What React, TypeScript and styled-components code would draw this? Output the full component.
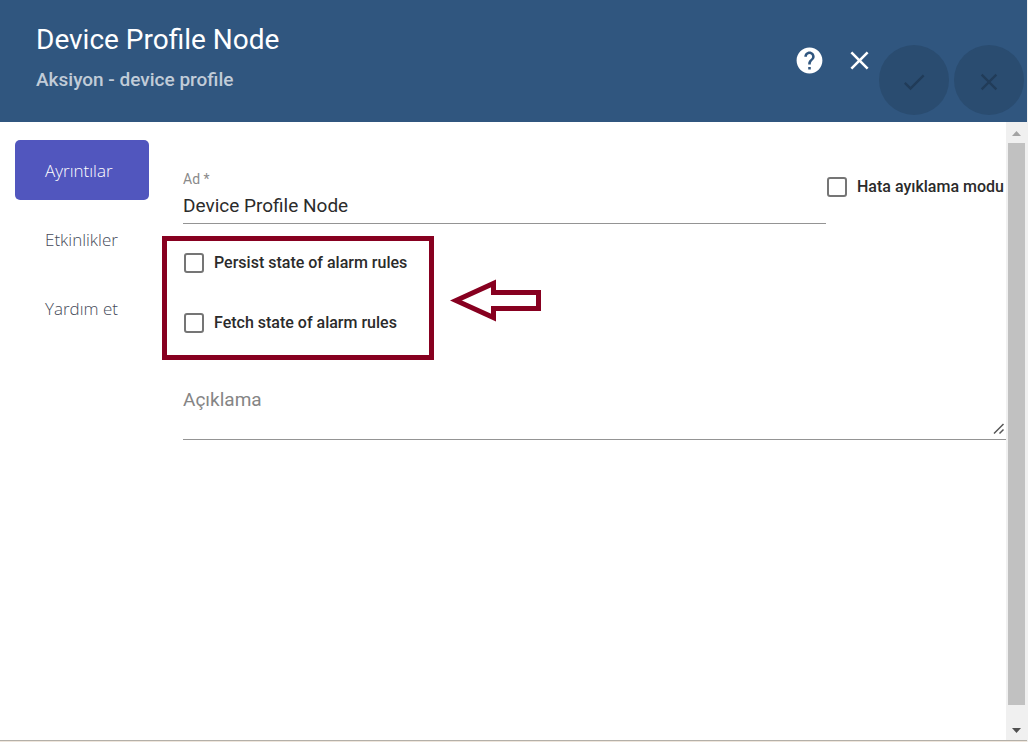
import React from 'react';
import styled, { createGlobalStyle } from 'styled-components';

const GlobalStyle = createGlobalStyle`
  * { box-sizing: border-box; }
  body {
    margin: 0;
    background: #fff;
    color: #222;
    font-family: Roboto, "Liberation Sans", sans-serif;
  }
  button, input, textarea { font-family: inherit; }
`;

const Page = styled.div`
  display: flex;
  flex-direction: column;
  min-height: 100vh;
  border-right: 1px solid #f0f0f0;
  background: #efe6dc;
`;

const Header = styled.header`
  display: flex;
  align-items: flex-start;
  height: 122px;
  padding: 20px 3px 0 36px;
  background: #30567f;
`;

const Titles = styled.div`
  flex: 1;
  min-width: 0;
`;

const Title = styled.h1`
  margin: 0;
  font-size: 28px;
  line-height: 40px;
  font-weight: 400;
  color: #fff;
`;

const Subtitle = styled.p`
  margin: 8px 0 0;
  font-size: 19px;
  line-height: 24px;
  font-weight: 500;
  color: #c1ccd8;
`;

const HeaderActions = styled.div`
  display: flex;
  align-items: center;
  gap: 10px;
  padding-top: 20px;
`;

const IconButton = styled.button`
  display: grid;
  place-items: center;
  width: 40px;
  height: 40px;
  padding: 0;
  border: 0;
  background: none;
  color: #fff;
`;

const RoundActions = styled.div`
  display: flex;
  gap: 5px;
  padding-top: 25px;
`;

const RoundButton = styled.button`
  display: grid;
  place-items: center;
  width: 70px;
  height: 70px;
  padding: 3px 0 0;
  border: 0;
  border-radius: 50%;
  background: #2a4c70;
  color: #213c59;
`;

const Body = styled.div`
  display: flex;
  flex: 1;
  border-bottom: 1px solid #b4b0a9;
  margin-bottom: 1px;
  background: #fff;
`;

const Nav = styled.nav`
  display: flex;
  flex-direction: column;
  gap: 9px;
  width: 149px;
  padding: 18px 0 0 15px;
`;

const NavButton = styled.button<{ $active?: boolean }>`
  height: 60px;
  padding: 0 0 0 30px;
  border: 0;
  border-radius: 5px;
  background: ${(p) => (p.$active ? '#5156be' : 'transparent')};
  color: ${(p) => (p.$active ? '#fff' : '#454a58')};
  font-family: "Open Sans", sans-serif;
  font-size: 17px;
  font-weight: 300;
  text-align: left;
`;

const Form = styled.form`
  flex: 1;
  min-width: 0;
  padding: 47px 0 0 34px;
`;

const NameRow = styled.div`
  display: flex;
  align-items: flex-start;
`;

const Field = styled.div`
  display: flex;
  flex: 1;
  flex-direction: column;
  min-width: 0;
`;

const FieldLabel = styled.label`
  font-size: 14px;
  line-height: 20px;
  color: #8a8a8a;
`;

const TextInput = styled.input`
  width: 100%;
  height: 35px;
  padding: 0 0 2px;
  border: 0;
  border-bottom: 1px solid #949494;
  outline: 0;
  background: none;
  color: #2b2b2b;
  font-size: 19px;
`;

const CheckLabel = styled.label`
  display: flex;
  align-items: center;
  gap: 10px;
  height: 20px;
  overflow: hidden;
  color: #2b2b2b;
  font-size: 16px;
  line-height: 20px;
  font-weight: 500;
  white-space: nowrap;
`;

const DebugOption = styled.div`
  width: 180px;
  padding: 8px 0 0 1px;
`;

const Checkbox = styled.input`
  appearance: none;
  flex: none;
  width: 20px;
  height: 20px;
  margin: 0;
  border: 2px solid #757575;
  border-radius: 3px;
  background: #fff;
`;

const Options = styled.div`
  position: relative;
  display: flex;
  flex-direction: column;
  gap: 40px;
  padding: 29px 0 50px 1px;
`;

const Highlight = styled.div`
  position: absolute;
  top: 12px;
  left: -21px;
  width: 272px;
  height: 124px;
  border: 5px solid #870020;
  pointer-events: none;
`;

const Arrow = styled.svg`
  position: absolute;
  top: 54px;
  left: 267px;
`;

const DescriptionField = styled.div`
  position: relative;
`;

const Description = styled.textarea`
  display: block;
  width: 100%;
  height: 57px;
  padding: 5px 0 0;
  border: 0;
  border-bottom: 1px solid #949494;
  outline: 0;
  background: none;
  font-size: 19px;
  line-height: 24px;
  resize: none;
  &::placeholder { color: #858585; opacity: 1; }
`;

const Grip = styled.svg`
  position: absolute;
  right: 1px;
  bottom: 5px;
  pointer-events: none;
`;

const Scrollbar = styled.div`
  display: flex;
  flex-direction: column;
  width: 21px;
  padding: 0 2px;
  background: #f0f0f0;
`;

const ScrollArrow = styled.svg`
  display: block;
  flex: none;
  width: 17px;
`;

const Thumb = styled.div`
  flex: 1;
  background: #c1c1c1;
`;

const closePath =
  'M19 6.41 17.59 5 12 10.59 6.41 5 5 6.41 10.59 12 5 17.59 6.41 19 12 13.41 17.59 19 19 17.59 13.41 12z';

function CloseIcon({ size }: { size: number }) {
  return (
    <svg width={size} height={size} viewBox="0 0 24 24" fill="currentColor" aria-hidden="true">
      <path d={closePath} />
    </svg>
  );
}

export default function App() {
  return (
    <Page>
      <GlobalStyle />
      <Header>
        <Titles>
          <Title>Device Profile Node</Title>
          <Subtitle>Aksiyon - device profile</Subtitle>
        </Titles>
        <HeaderActions>
          <IconButton type="button" aria-label="Help">
            <svg width="31" height="31" viewBox="0 0 24 24" fill="currentColor" aria-hidden="true">
              <path d="M12 2C6.480 2 2 6.480 2 12s4.480 10 10 10 10-4.480 10-10S17.520 2 12 2zm1 17h-2v-2h2v2zm2.070-7.750l-.9.920C13.450 12.900 13 13.500 13 15h-2v-.5c0-1.100.450-2.100 1.170-2.830l1.240-1.260c.370-.360.590-.860.590-1.410 0-1.100-.9-2-2-2s-2 .9-2 2H8c0-2.210 1.790-4 4-4s4 1.790 4 4c0 .880-.360 1.680-.930 2.250z" />
            </svg>
          </IconButton>
          <IconButton type="button" aria-label="Close">
            <CloseIcon size={31} />
          </IconButton>
        </HeaderActions>
        <RoundActions>
          <RoundButton type="button" aria-label="Apply" disabled>
            <svg width="28" height="28" viewBox="0 0 24 24" fill="currentColor" aria-hidden="true">
              <path d="M9 16.170 4.830 12l-1.420 1.410L9 19 21 7l-1.410-1.410z" />
            </svg>
          </RoundButton>
          <RoundButton type="button" aria-label="Discard" disabled>
            <CloseIcon size={28} />
          </RoundButton>
        </RoundActions>
      </Header>
      <Body>
        <Nav>
          <NavButton type="button" $active>Ayrıntılar</NavButton>
          <NavButton type="button">Etkinlikler</NavButton>
          <NavButton type="button">Yardım et</NavButton>
        </Nav>
        <Form>
          <NameRow>
            <Field>
              <FieldLabel htmlFor="name">Ad *</FieldLabel>
              <TextInput id="name" defaultValue="Device Profile Node" />
            </Field>
            <DebugOption>
              <CheckLabel>
                <Checkbox type="checkbox" />
                Hata ayıklama modu
              </CheckLabel>
            </DebugOption>
          </NameRow>
          <Options>
            <CheckLabel>
              <Checkbox type="checkbox" />
              Persist state of alarm rules
            </CheckLabel>
            <CheckLabel>
              <Checkbox type="checkbox" />
              Fetch state of alarm rules
            </CheckLabel>
            <Highlight />
            <Arrow width="94" height="46" viewBox="0 0 94 46" aria-hidden="true">
              <path
                d="M6 22.500 43.500 5.500v9h45v16h-45v9z"
                fill="#fff"
                stroke="#870020"
                strokeWidth="5"
              />
            </Arrow>
          </Options>
          <DescriptionField>
            <Description aria-label="Açıklama" placeholder="Açıklama" />
            <Grip width="12" height="12" viewBox="0 0 12 12" aria-hidden="true">
              <path d="M1 10.500 10.500 1M6.500 10.500l4-4" stroke="#555" strokeWidth="1.500" />
            </Grip>
          </DescriptionField>
        </Form>
        <Scrollbar>
          <ScrollArrow height="21" viewBox="0 0 17 21" aria-hidden="true">
            <path d="M4 14h9L8.500 9z" fill="#a3a3a3" />
          </ScrollArrow>
          <Thumb />
          <ScrollArrow height="35" viewBox="0 0 17 35" aria-hidden="true">
            <path d="M4 23h9l-4.500 5z" fill="#505050" />
          </ScrollArrow>
        </Scrollbar>
      </Body>
    </Page>
  );
}
